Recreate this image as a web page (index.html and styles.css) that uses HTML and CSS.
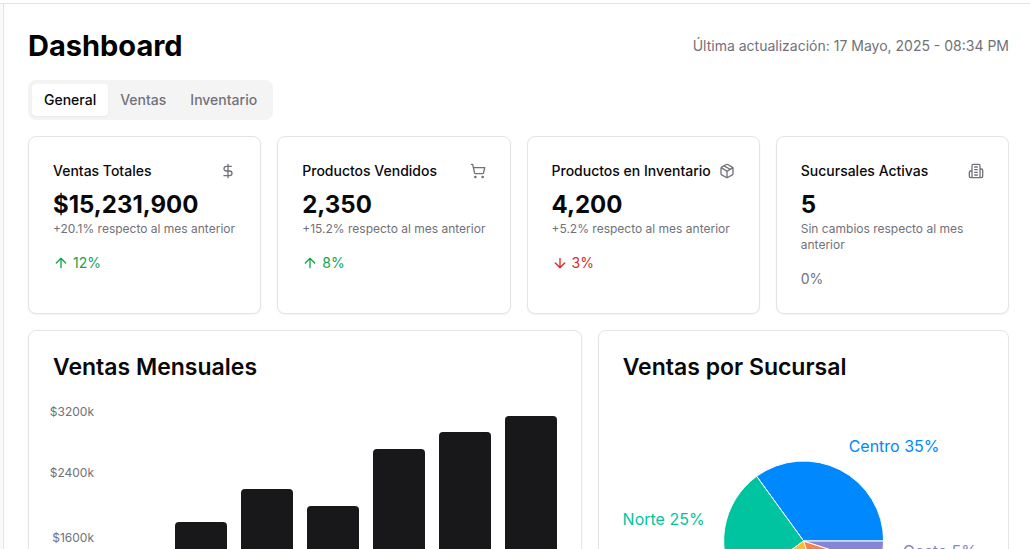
FILE: index.html
```html
<!DOCTYPE html>
<html lang="es">
<head>
<meta charset="utf-8">
<meta name="viewport" content="width=device-width, initial-scale=1">
<title>Dashboard</title>
<link rel="stylesheet" href="styles.css">
</head>
<body>
<header class="topbar"></header>
<div class="shell">
<aside class="sidebar"></aside>
<main class="content">
  <div class="heading">
    <h1 class="title">Dashboard</h1>
    <p class="updated">Última actualización: 17 Mayo, 2025 - 08:34 PM</p>
  </div>
  <div class="tabs" role="tablist">
    <button class="tab tab-active" role="tab" aria-selected="true">General</button>
    <button class="tab" role="tab" aria-selected="false">Ventas</button>
    <button class="tab" role="tab" aria-selected="false">Inventario</button>
  </div>

  <section class="stats">
    <article class="card">
      <div class="card-head">
        <h2 class="card-title">Ventas Totales</h2>
        <svg class="icon" viewBox="0 0 24 24"><path d="M12 2v20M17 5H9.5a3.5 3.5 0 0 0 0 7h5a3.5 3.5 0 0 1 0 7H6"/></svg>
      </div>
      <p class="value">$15,231,900</p>
      <p class="note">+20.1% respecto al mes anterior</p>
      <p class="trend trend-up"><svg class="icon" viewBox="0 0 24 24"><path d="m5 12 7-7 7 7M12 19V5"/></svg>12%</p>
    </article>
    <article class="card">
      <div class="card-head">
        <h2 class="card-title">Productos Vendidos</h2>
        <svg class="icon" viewBox="0 0 24 24"><circle cx="8" cy="21" r="1"/><circle cx="19" cy="21" r="1"/><path d="M2.05 2.05h2l2.66 12.42a2 2 0 0 0 2 1.58h9.78a2 2 0 0 0 1.95-1.57l1.65-7.43H5.12"/></svg>
      </div>
      <p class="value">2,350</p>
      <p class="note">+15.2% respecto al mes anterior</p>
      <p class="trend trend-up"><svg class="icon" viewBox="0 0 24 24"><path d="m5 12 7-7 7 7M12 19V5"/></svg>8%</p>
    </article>
    <article class="card">
      <div class="card-head">
        <h2 class="card-title">Productos en Inventario</h2>
        <svg class="icon" viewBox="0 0 24 24"><path d="M11 21.73a2 2 0 0 0 2 0l7-4A2 2 0 0 0 21 16V8a2 2 0 0 0-1-1.73l-7-4a2 2 0 0 0-2 0l-7 4A2 2 0 0 0 3 8v8a2 2 0 0 0 1 1.73zM12 22V12M3.3 7l7.703 4.734a2 2 0 0 0 1.994 0L20.7 7M7.5 4.27l9 5.15"/></svg>
      </div>
      <p class="value">4,200</p>
      <p class="note">+5.2% respecto al mes anterior</p>
      <p class="trend trend-down"><svg class="icon" viewBox="0 0 24 24"><path d="M12 5v14M19 12l-7 7-7-7"/></svg>3%</p>
    </article>
    <article class="card">
      <div class="card-head">
        <h2 class="card-title">Sucursales Activas</h2>
        <svg class="icon" viewBox="0 0 24 24"><path d="M6 22V4a2 2 0 0 1 2-2h8a2 2 0 0 1 2 2v18ZM6 12H4a2 2 0 0 0-2 2v6a2 2 0 0 0 2 2h2M18 9h2a2 2 0 0 1 2 2v9a2 2 0 0 1-2 2h-2M10 6h4M10 10h4M10 14h4M10 18h4"/></svg>
      </div>
      <p class="value">5</p>
      <p class="note">Sin cambios respecto al mes anterior</p>
      <p class="trend">0%</p>
    </article>
  </section>

  <section class="charts">
    <article class="card chart-sales">
      <h2 class="chart-title">Ventas Mensuales</h2>
      <div class="bar-chart">
        <div class="axis"><span>$3200k</span><span>$2400k</span><span>$1600k</span><span>$800k</span><span>$0k</span></div>
        <div class="bars">
          <div class="bar" style="height:37.5%"></div>
          <div class="bar" style="height:56.25%"></div>
          <div class="bar" style="height:68.75%"></div>
          <div class="bar" style="height:62.5%"></div>
          <div class="bar" style="height:84.375%"></div>
          <div class="bar" style="height:90.625%"></div>
          <div class="bar" style="height:96.875%"></div>
        </div>
        <div class="months"><span>Ene</span><span>Feb</span><span>Mar</span><span>Abr</span><span>May</span><span>Jun</span><span>Jul</span></div>
      </div>
    </article>
    <article class="card chart-branches">
      <h2 class="chart-title">Ventas por Sucursal</h2>
      <svg class="pie" viewBox="-180 -138 360 300" role="img" aria-label="Ventas por Sucursal">
        <g stroke="#fff" stroke-width="1">
          <path fill="#0088fe" d="M0 0H80A80 80 0 0 0 -47.02 -64.72Z"/>
          <path fill="#00c49f" d="M0 0L-47.02 -64.72A80 80 0 0 0 -64.72 47.02Z"/>
          <path fill="#ffbb28" d="M0 0L-64.72 47.02A80 80 0 0 0 24.72 76.08Z"/>
          <path fill="#ff8042" d="M0 0L24.72 76.08A80 80 0 0 0 76.08 24.72Z"/>
          <path fill="#8884d8" d="M0 0L76.08 24.72A80 80 0 0 0 80 0Z"/>
        </g>
        <text x="45" y="-89" fill="#0088fe">Centro 35%</text>
        <text x="-99" y="-16" fill="#00c49f" text-anchor="end">Norte 25%</text>
        <text x="-31" y="95" fill="#ffbb28" text-anchor="end">Sur 20%</text>
        <text x="71" y="71" fill="#ff8042">Este 15%</text>
        <text x="99" y="16" fill="#8884d8">Oeste 5%</text>
      </svg>
    </article>
  </section>
</main>
</div>
</body>
</html>
```
FILE: styles.css
```css
* { box-sizing: border-box; }
body, h1, h2, p { margin: 0; }
body {
  font-family: Inter, "Liberation Sans", sans-serif;
  font-size: 14px;
  line-height: 20px;
  color: #09090b;
  background: #fff;
}
.topbar { height: 4px; border-bottom: 1px solid #e4e4e7; }
.shell { display: flex; }
.sidebar { flex: none; width: 4px; background: #fafafa; border-right: 1px solid #e4e4e7; }
.content {
  flex: 1;
  min-width: 0;
  display: flex;
  flex-direction: column;
  gap: 16px;
  padding: 24px 21px 24px 24px;
}
.heading { display: flex; align-items: center; justify-content: space-between; gap: 16px; }
.title { font-size: 29px; line-height: 36px; font-weight: 700; color: #000; }
.updated { color: #71717a; }
.tabs {
  align-self: flex-start;
  display: flex;
  padding: 4px;
  border-radius: 8px;
  background: #f4f4f5;
}
.tab {
  border: 0;
  border-radius: 4px;
  padding: 6px 12px;
  background: transparent;
  color: #71717a;
  font: inherit;
  font-weight: 500;
}
.tab-active { background: #fff; color: #09090b; box-shadow: 0 1px 2px rgba(0, 0, 0, 0.05); }
.stats { display: grid; grid-template-columns: repeat(4, minmax(0, 1fr)); gap: 16px; }
.card {
  padding: 24px;
  border: 1px solid #e4e4e7;
  border-radius: 8px;
  background: #fff;
  box-shadow: 0 1px 2px rgba(0, 0, 0, 0.05);
}
.card-head { display: flex; align-items: center; justify-content: space-between; margin-bottom: 8px; }
.card-title { font-size: 14px; line-height: 20px; font-weight: 500; }
.icon {
  flex: none;
  width: 16px;
  height: 16px;
  fill: none;
  stroke: currentColor;
  stroke-width: 2;
  stroke-linecap: round;
  stroke-linejoin: round;
}
.card-head .icon { color: #71717a; }
.value { font-size: 24px; line-height: 32px; font-weight: 700; }
.note { font-size: 12px; line-height: 16px; color: #71717a; }
.trend { display: flex; align-items: center; gap: 4px; margin-top: 16px; color: #71717a; }
.trend-up { color: #16a34a; }
.trend-down { color: #dc2626; }
.charts { display: grid; grid-template-columns: repeat(7, minmax(0, 1fr)); gap: 16px; }
.chart-sales { grid-column: span 4; }
.chart-branches { grid-column: span 3; }
.chart-title { font-size: 23px; line-height: 24px; font-weight: 600; margin-bottom: 24px; }
.bar-chart {
  display: grid;
  grid-template-columns: 52px 1fr;
  grid-template-rows: 260px 30px;
  column-gap: 8px;
  margin: 0 -7px 0 -11px;
  padding-top: 5px;
  font-size: 12px;
  line-height: 16px;
  color: #71717a;
}
.axis {
  display: grid;
  grid-template-rows: 61px 65px 65px 61px 16px;
  justify-items: end;
  margin-top: -4px;
}
.bars { display: grid; grid-template-columns: repeat(7, 1fr); align-items: end; }
.bar { margin: 0 7px; border-radius: 4px 4px 0 0; background: #18181b; }
.months {
  grid-column: 2;
  display: grid;
  grid-template-columns: repeat(7, 1fr);
  justify-items: center;
  padding-top: 8px;
}
.pie { display: block; width: 100%; height: 300px; font-size: 16px; overflow: visible; }
```
